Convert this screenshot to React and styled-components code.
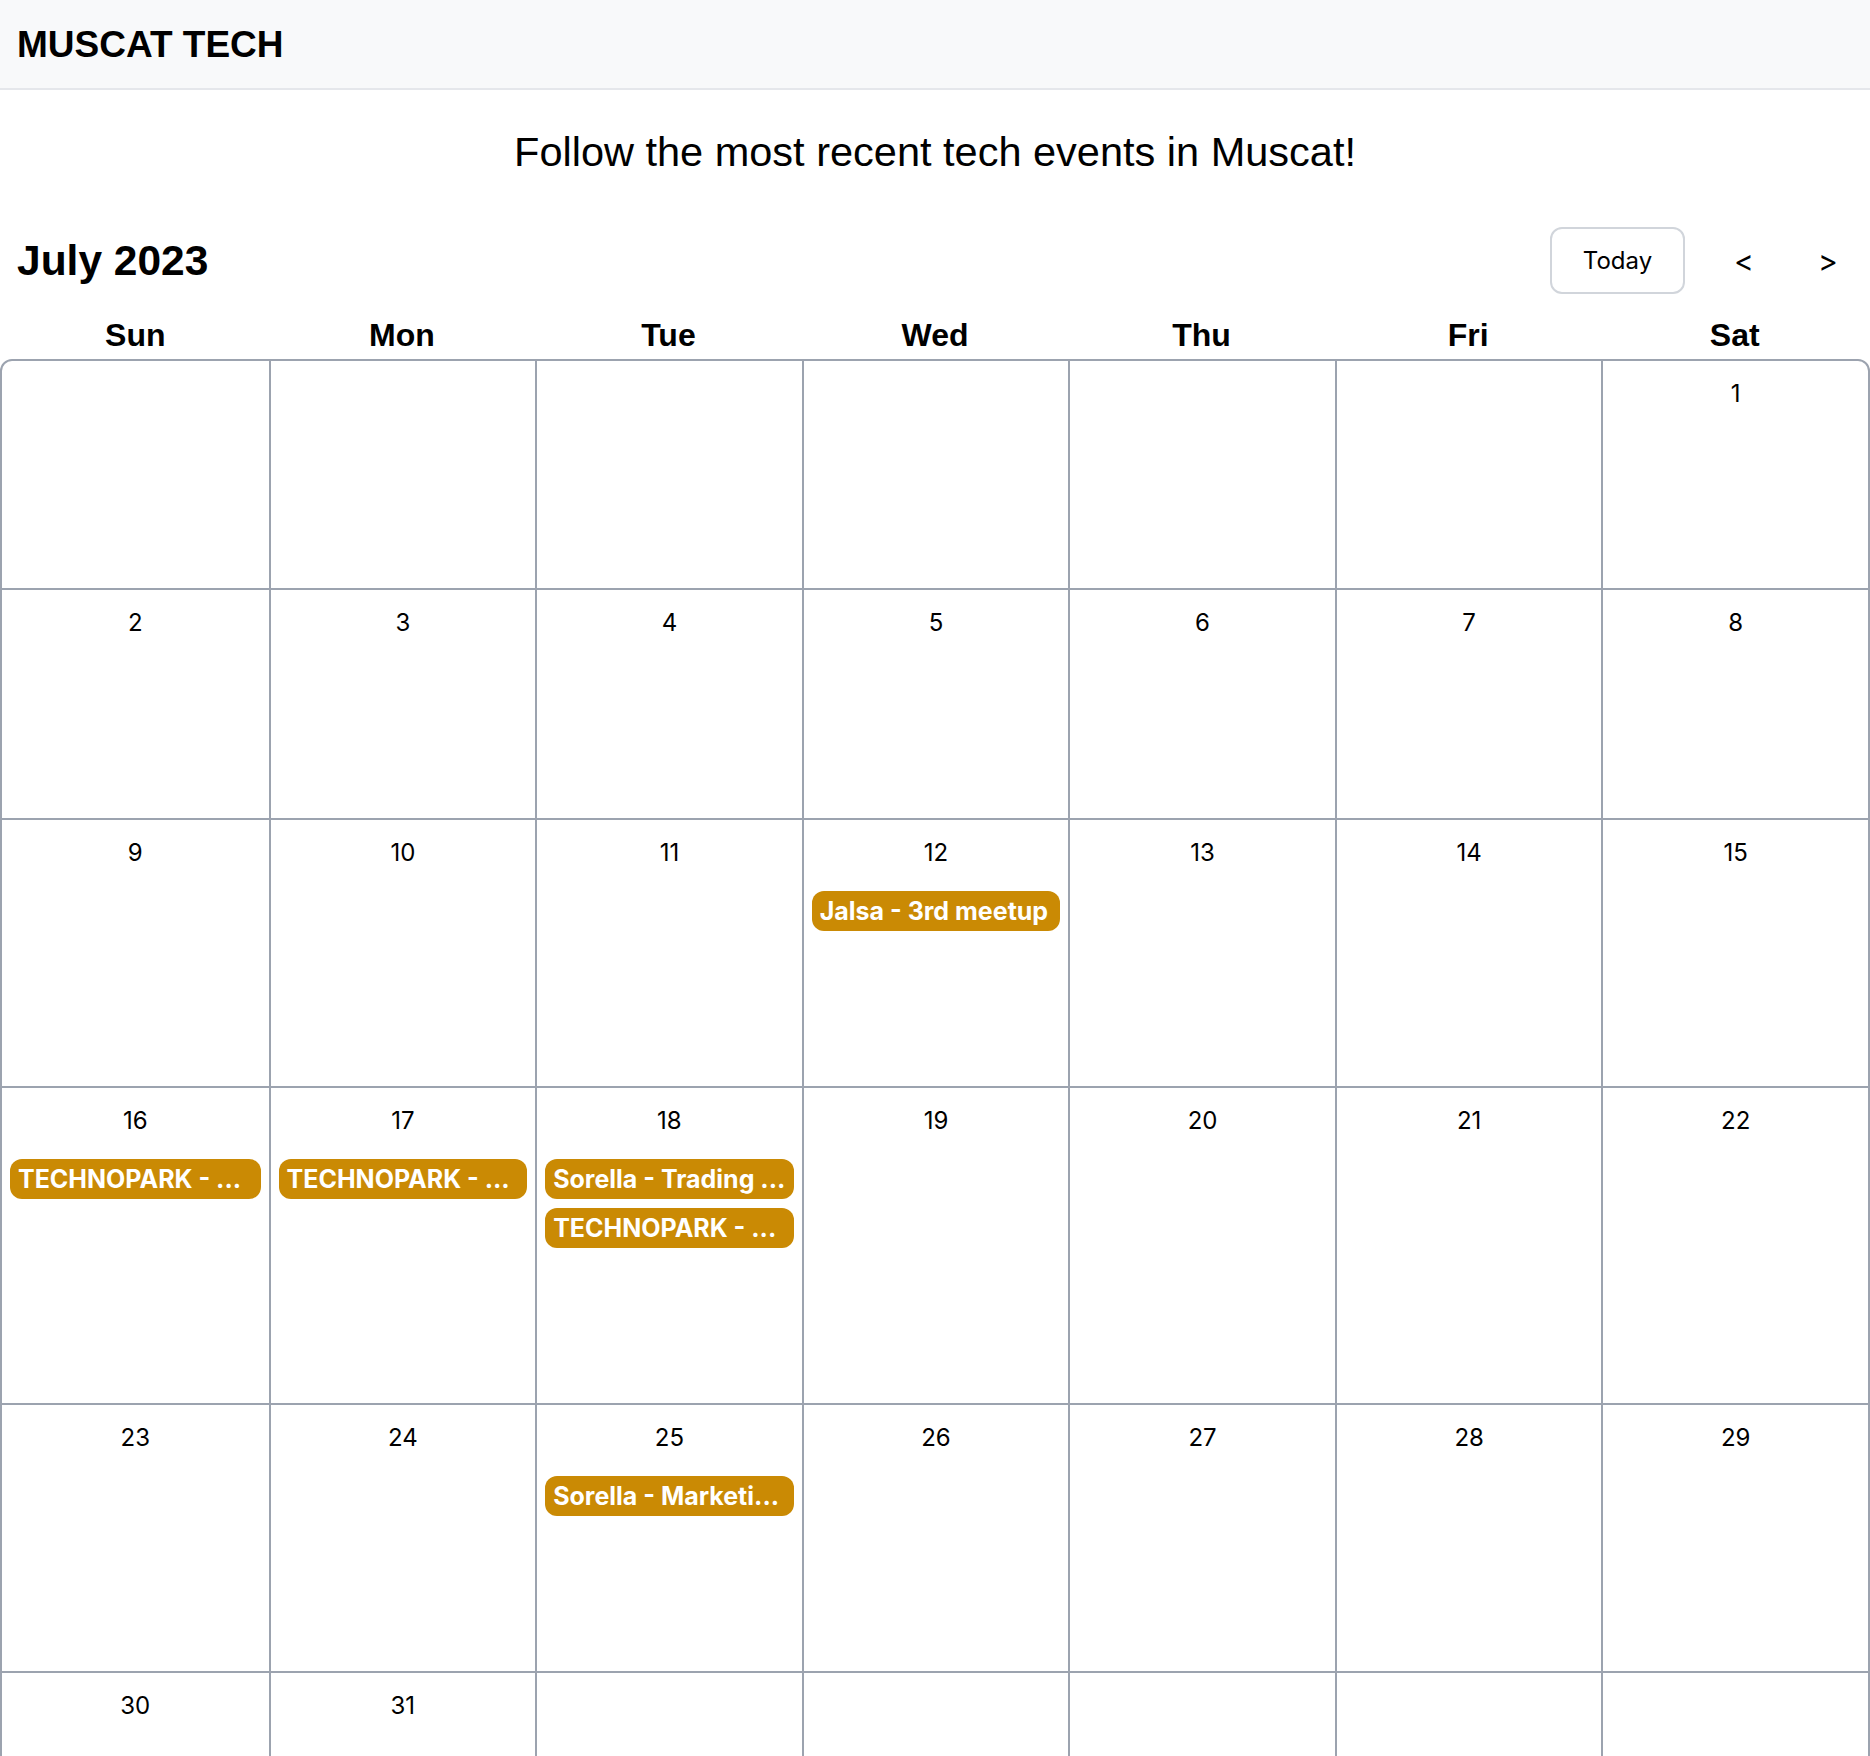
import React from 'react';
import styled, { createGlobalStyle } from 'styled-components';

const GlobalStyle = createGlobalStyle`
  body {
    margin: 0;
    background: #fff;
    color: #000;
    font-family: Inter, "Noto Sans", sans-serif;
  }
`;

const Navbar = styled.header`
  height: 88px;
  display: flex;
  align-items: center;
  padding: 0 17px;
  background: #f8f9fa;
  border-bottom: 2px solid #e5e7eb;
`;

const Brand = styled.div`
  font-family: "Liberation Sans", Arial, sans-serif;
  font-weight: 700;
  font-size: 37px;
  padding-top: 2px;
`;

const Subtitle = styled.h2`
  margin: 37px 0 0;
  text-align: center;
  font-family: "Liberation Sans", Arial, sans-serif;
  font-weight: 400;
  font-size: 41.5px;
  line-height: 49px;
`;

const Toolbar = styled.div`
  margin-top: 51px;
  height: 67px;
  display: flex;
  align-items: center;
  padding: 0 14px 0 17px;
`;

const Month = styled.h1`
  margin: 0;
  flex: 1;
  font-family: "Liberation Sans", Arial, sans-serif;
  font-weight: 700;
  font-size: 42.5px;
`;

const TodayButton = styled.button`
  width: 135px;
  height: 67px;
  border: 2px solid #d1d5db;
  border-radius: 12px;
  background: #fff;
  font-family: Inter, sans-serif;
  font-size: 24px;
  color: #000;
  margin-right: 31px;
`;

const ArrowButton = styled.button`
  width: 56px;
  height: 67px;
  border: none;
  background: none;
  font-family: Inter, sans-serif;
  font-size: 30px;
  color: #000;
  padding: 0;
  margin-left: ${p => (p.$gap ? '28px' : '0')};
`;

const WeekRow = styled.div`
  display: grid;
  grid-template-columns: repeat(7, 1fr);
  padding: 21px 2px 4px;
`;

const WeekDay = styled.div`
  text-align: center;
  font-family: "Liberation Sans", Arial, sans-serif;
  font-weight: 700;
  font-size: 32px;
  line-height: 40px;
`;

const Grid = styled.div`
  display: grid;
  grid-template-columns: repeat(7, 1fr);
  border: 2px solid #9ca3af;
  border-radius: 12px;
  overflow: hidden;
`;

const Cell = styled.div`
  min-height: 230px;
  box-sizing: border-box;
  padding: 15px 8px 155px;
  display: flex;
  flex-direction: column;
  border-left: 2px solid #9ca3af;
  border-top: 2px solid #9ca3af;
  min-width: 0;

  &:nth-child(7n + 1) {
    border-left: none;
  }
  &:nth-child(-n + 7) {
    border-top: none;
    min-height: 227px;
  }
`;

const DayNumber = styled.div`
  text-align: center;
  font-size: 24px;
  line-height: 36px;
  height: 36px;
`;

const Events = styled.div`
  display: flex;
  flex-direction: column;
  gap: 9px;
  margin-top: 20px;
`;

const EventChip = styled.div`
  height: 40px;
  line-height: 40px;
  padding: 0 8px;
  border-radius: 12px;
  background: #ca8a04;
  color: #fff;
  font-weight: 700;
  font-size: 25px;
  white-space: nowrap;
  overflow: hidden;
  text-overflow: ellipsis;
`;

const weekdays = ['Sun', 'Mon', 'Tue', 'Wed', 'Thu', 'Fri', 'Sat'];

const events = {
  12: ['Jalsa - 3rd meetup'],
  16: ['TECHNOPARK - ...'],
  17: ['TECHNOPARK - ...'],
  18: ['Sorella - Trading ...', 'TECHNOPARK - ...'],
  25: ['Sorella - Marketi...'],
};

// July 2023 starts on a Saturday
const cells = [];
for (let i = 0; i < 6; i++) cells.push(null);
for (let d = 1; d <= 31; d++) cells.push(d);
while (cells.length % 7) cells.push(null);

export default function App() {
  return (
    <>
      <GlobalStyle />
      <Navbar>
        <Brand>MUSCAT TECH</Brand>
      </Navbar>
      <Subtitle>Follow the most recent tech events in Muscat!</Subtitle>
      <Toolbar>
        <Month>July 2023</Month>
        <TodayButton>Today</TodayButton>
        <ArrowButton>&lt;</ArrowButton>
        <ArrowButton $gap>&gt;</ArrowButton>
      </Toolbar>
      <WeekRow>
        {weekdays.map(w => (
          <WeekDay key={w}>{w}</WeekDay>
        ))}
      </WeekRow>
      <Grid>
        {cells.map((d, i) => (
          <Cell key={i}>
            <DayNumber>{d || ''}</DayNumber>
            {d && events[d] && (
              <Events>
                {events[d].map((e, j) => (
                  <EventChip key={j}>{e}</EventChip>
                ))}
              </Events>
            )}
          </Cell>
        ))}
      </Grid>
    </>
  );
}
